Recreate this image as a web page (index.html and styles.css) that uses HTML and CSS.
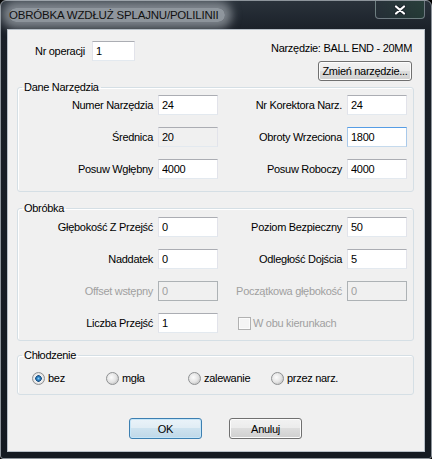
FILE: index.html
```html
<!DOCTYPE html>
<html lang="pl">
<head>
    <meta charset="UTF-8">
    <meta name="viewport" content="width=device-width, initial-scale=1.0">
    <title>Obróbka wzdłuż splajnu/polilinii</title>
    <link rel="stylesheet" href="styles.css">
</head>
<body>
    <div class="window">
        <div class="titlebar">
            <span class="title">OBRÓBKA WZDŁUŻ SPLAJNU/POLILINII</span>
            <button class="close" aria-label="Zamknij">
                <svg width="12" height="10" viewBox="0 0 12 10">
                    <path d="M2 1.5 L10 8.5 M10 1.5 L2 8.5" stroke="#1b232b" stroke-width="4" stroke-linecap="round"/>
                    <path d="M2 1.5 L10 8.5 M10 1.5 L2 8.5" stroke="#fff" stroke-width="2.2" stroke-linecap="round"/>
                </svg>
            </button>
        </div>

        <div class="client">
            <div class="top">
                <label class="op">Nr operacji <input class="field op-field" value="1"></label>
                <div class="tool">
                    <span class="tool-name">Narzędzie: BALL END - 20MM</span>
                    <button class="btn btn-tool">Zmień narzędzie...</button>
                </div>
            </div>

            <fieldset class="group">
                <legend>Dane Narzędzia</legend>
                <div class="grid">
                    <span class="lbl">Numer Narzędzia</span>
                    <input class="field" value="24">
                    <span class="lbl">Nr Korektora Narz.</span>
                    <input class="field" value="24">

                    <span class="lbl">Średnica</span>
                    <input class="field readonly" value="20" readonly>
                    <span class="lbl">Obroty Wrzeciona</span>
                    <input class="field focus" value="1800">

                    <span class="lbl">Posuw Wgłębny</span>
                    <input class="field" value="4000">
                    <span class="lbl">Posuw Roboczy</span>
                    <input class="field" value="4000">
                </div>
            </fieldset>

            <fieldset class="group group-work">
                <legend>Obróbka</legend>
                <div class="grid">
                    <span class="lbl">Głębokość Z Przejść</span>
                    <input class="field" value="0">
                    <span class="lbl">Poziom Bezpieczny</span>
                    <input class="field" value="50">

                    <span class="lbl">Naddatek</span>
                    <input class="field" value="0">
                    <span class="lbl">Odległość Dojścia</span>
                    <input class="field" value="5">

                    <span class="lbl disabled">Offset wstępny</span>
                    <input class="field" value="0" disabled>
                    <span class="lbl disabled">Początkowa głębokość</span>
                    <input class="field" value="0" disabled>

                    <span class="lbl">Liczba Przejść</span>
                    <input class="field" value="1">
                    <label class="check disabled"><input type="checkbox" disabled> W obu kierunkach</label>
                </div>
            </fieldset>

            <fieldset class="group group-cool">
                <legend>Chłodzenie</legend>
                <div class="radios">
                    <label class="radio"><input type="radio" name="cool" checked> bez</label>
                    <label class="radio"><input type="radio" name="cool"> mgła</label>
                    <label class="radio"><input type="radio" name="cool"> zalewanie</label>
                    <label class="radio"><input type="radio" name="cool"> przez narz.</label>
                </div>
            </fieldset>

            <div class="actions">
                <button class="btn btn-default">OK</button>
                <button class="btn">Anuluj</button>
            </div>
        </div>
    </div>
</body>
</html>
```

FILE: styles.css
```css
* {
    box-sizing: border-box;
}

body {
    margin: 0;
    background: #000;
    font-family: "Liberation Sans", Arial, sans-serif;
    font-size: 11px;
    letter-spacing: -0.3px;
    color: #000;
}

/* ramka okna */
.window {
    width: 432px;
    height: 459px;
    display: flex;
    flex-direction: column;
    padding: 0 6px 6px;
    border: 1px solid #8d949b;
    border-radius: 6px 6px 3px 3px;
    background: linear-gradient(#2a323b 0, #1a2028 30px, #141a21 100%);
}

.titlebar {
    height: 28px;
    display: flex;
    justify-content: space-between;
    align-items: flex-start;
    padding-left: 2px;
}

.title {
    margin-top: 7px;
    line-height: 14px;
    padding: 0 6px 0 0;
    font-size: 11.5px;
    letter-spacing: -0.2px;
    color: #111;
    background: rgba(215, 222, 228, 0.6);
    border-radius: 10px;
    box-shadow: 0 0 10px 7px rgba(215, 222, 228, 0.5);
}

.close {
    width: 50px;
    height: 18px;
    margin: 0;
    padding: 0;
    display: flex;
    align-items: center;
    justify-content: center;
    border: 1px solid rgba(200, 210, 220, 0.45);
    border-top: none;
    border-radius: 0 0 4px 4px;
    background: linear-gradient(90deg, rgba(40, 50, 58, 0.6), rgba(40, 80, 60, 0.45));
}

/* obszar klienta */
.client {
    flex: 1;
    display: flex;
    flex-direction: column;
    padding-top: 11px;
    background: #f0f0f0;
    border: 1px solid #b7bfc7;
}

.top {
    height: 40px;
    display: flex;
    justify-content: space-between;
    align-items: flex-start;
    padding: 0 12px 0 27px;
}

.op {
    display: flex;
    align-items: center;
    gap: 7px;
}

.tool {
    display: flex;
    flex-direction: column;
    align-items: flex-end;
}

.tool-name {
    line-height: 14px;
    margin-bottom: 6px;
}

.field {
    width: 60px;
    height: 20px;
    margin: 0;
    padding: 0 3px;
    font: inherit;
    letter-spacing: inherit;
    color: #000;
    background: #fff;
    border: 1px solid;
    border-color: #abadb3 #e2e3ea #e3e9ef #e2e3ea;
    outline: none;
}

.op-field {
    width: 43px;
}

.field.readonly {
    background: #f0f0f0;
}

.field.focus {
    border-color: #569de5 #a9c9ea #c5daed #a9c9ea;
}

.field:disabled {
    background: #f0f0f0;
    color: #a0a0a0;
    border-color: #adb2b5;
}

/* ramki grup */
.group {
    margin: 0 10px 0 9px;
    padding: 2px 7px 12px 0;
    min-width: 0;
    border: 1px solid #d5dfe5;
    border-radius: 3px;
    box-shadow: inset 1px 1px 0 #fff;
}

.group legend {
    margin-left: 4px;
    padding: 0 2px;
    line-height: 12px;
}

.group-work {
    margin-top: 10px;
    padding-top: 3px;
    padding-bottom: 7px;
}

.group-cool {
    margin-top: 8px;
    padding-top: 11px;
    padding-bottom: 9px;
}

.grid {
    display: grid;
    grid-template-columns: 135px 60px 119px 59px;
    grid-auto-rows: 20px;
    column-gap: 5px;
    row-gap: 12px;
    align-items: center;
}

.lbl {
    text-align: right;
    white-space: nowrap;
}

.disabled {
    color: #a0a0a0;
}

.check {
    grid-column: 3 / span 2;
    padding-left: 15px;
    display: flex;
    align-items: center;
    gap: 2px;
}

.check input {
    appearance: none;
    width: 13px;
    height: 13px;
    margin: 0;
    border: 1px solid #b1b1b1;
    background: #f4f4f4;
    box-shadow: inset 0 0 0 1px #fbfbfb;
}

/* radio */
.radios {
    display: grid;
    grid-template-columns: 74px 82px 83px auto;
    padding-left: 14px;
    height: 13px;
}

.radio {
    display: flex;
    align-items: center;
    gap: 3px;
    line-height: 13px;
}

.radio input {
    appearance: none;
    width: 13px;
    height: 13px;
    margin: 0;
    border-radius: 50%;
    border: 1px solid #8e9092;
    background: radial-gradient(circle at 40% 40%, #fcfcfc 0, #e2e2e2 5px, #d2d2d2 6px);
}

.radio input:checked {
    background: radial-gradient(circle, #8fd0f5 0, #2f86c9 1.5px, #1c4f80 3px, #f2f2f2 3.5px, #dadada 6px);
}

/* przyciski */
.actions {
    display: flex;
    justify-content: center;
    gap: 27px;
    margin-top: 23px;
    padding-right: 1px;
}

.btn {
    width: 73px;
    height: 21px;
    margin: 0;
    padding: 0;
    font: inherit;
    letter-spacing: inherit;
    color: #000;
    border: 1px solid #707070;
    border-radius: 3px;
    background: linear-gradient(#f2f2f2 0, #ebebeb 50%, #dddddd 50%, #cfcfcf 100%);
    box-shadow: inset 0 0 0 1px #fcfcfc;
}

.btn-tool {
    width: 94px;
    height: 20px;
}

.btn-default {
    border-color: #3c7fb1;
    background: linear-gradient(#eaf3f9 0, #e0ecf4 50%, #cde2ef 50%, #c0d8e8 100%);
    box-shadow: inset 0 0 0 1px #c6e6f8;
}
```
